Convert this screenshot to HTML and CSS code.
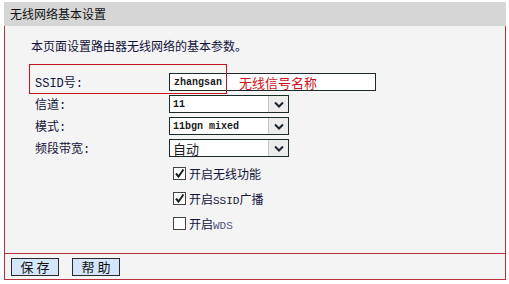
FILE: index.html
```html
<!doctype html>
<html lang="zh-CN">
  <head>
    <meta charset="UTF-8" />
    <title>无线网络基本设置</title>
    <link rel="stylesheet" href="styles.css">
  </head>
  <body>
    <div class="page">
      <div class="title">无线网络基本设置</div>
      <div class="panel">
        <div class="content">
          <p class="intro">本页面设置路由器无线网络的基本参数。</p>

          <div class="form">
            <div class="row">
              <label class="label">SSID号:</label>
              <div class="field text-field">
                <span class="value">zhangsan</span>
                <span class="note">无线信号名称</span>
              </div>
            </div>
            <div class="row">
              <label class="label">信道:</label>
              <div class="field select">
                <span class="value">11</span>
                <span class="arrow"><svg width="10" height="7" viewBox="0 0 10 7"><path d="M1 1.5 L5 5.5 L9 1.5" fill="none" stroke="#1c2430" stroke-width="2"/></svg></span>
              </div>
            </div>
            <div class="row">
              <label class="label">模式:</label>
              <div class="field select">
                <span class="value">11bgn mixed</span>
                <span class="arrow"><svg width="10" height="7" viewBox="0 0 10 7"><path d="M1 1.5 L5 5.5 L9 1.5" fill="none" stroke="#1c2430" stroke-width="2"/></svg></span>
              </div>
            </div>
            <div class="row">
              <label class="label">频段带宽:</label>
              <div class="field select">
                <span class="value cjk">自动</span>
                <span class="arrow"><svg width="10" height="7" viewBox="0 0 10 7"><path d="M1 1.5 L5 5.5 L9 1.5" fill="none" stroke="#1c2430" stroke-width="2"/></svg></span>
              </div>
            </div>

            <div class="checks">
              <div class="check">
                <span class="box"><svg width="11" height="11" viewBox="0 0 11 11"><path d="M2 5.5 L4.5 8.5 L9.5 1.5" fill="none" stroke="#222" stroke-width="2"/></svg></span>
                <span>开启无线功能</span>
              </div>
              <div class="check">
                <span class="box"><svg width="11" height="11" viewBox="0 0 11 11"><path d="M2 5.5 L4.5 8.5 L9.5 1.5" fill="none" stroke="#222" stroke-width="2"/></svg></span>
                <span>开启<span class="mono">SSID</span>广播</span>
              </div>
              <div class="check">
                <span class="box"></span>
                <span>开启<span class="mono dim">WDS</span></span>
              </div>
            </div>
          </div>

          <!-- annotation box round the SSID row -->
          <div class="mark"></div>
        </div>
        <div class="footer">
          <button type="button" class="btn">保 存</button>
          <button type="button" class="btn">帮 助</button>
        </div>
      </div>
    </div>
  </body>
</html>
```

FILE: styles.css
```css
body {
  margin: 0;
  background: #fff;
  font-family: "Noto Sans CJK SC", sans-serif;
  font-size: 12px;
  color: #12123a;
}

.page {
  width: 502px;
  margin: 2px 0 0 4px;
}

.title {
  height: 24px;
  line-height: 24px;
  padding-left: 6px;
  background: #d6d6d6;
  color: #111;
  font-size: 12px;
}

.panel {
  border: 1px solid #b8303c;
  border-top: none;
  background: #f4f4f4;
}

.content {
  position: relative;
  height: 227px;
  padding: 12px 0 0 26px;
  box-sizing: border-box;
}

.intro {
  margin: 0;
  height: 16px;
  line-height: 16px;
}

.form {
  margin-top: 19px;
  padding-left: 4px;
}

.row {
  display: flex;
  align-items: center;
  height: 18px;
  margin-bottom: 4px;
}

.label {
  width: 134px;
  font-family: "Liberation Mono", "Noto Sans CJK SC", monospace;
}

.mono {
  font-family: "Liberation Mono", monospace;
  font-size: 11px;
}

.mono.dim {
  color: #55557a;
}

.field {
  display: flex;
  align-items: center;
  height: 18px;
  box-sizing: border-box;
  border: 1px solid #1c2a2a;
  background: #fff;
}

.text-field {
  width: 207px;
  padding-left: 4px;
}

.select {
  width: 120px;
  padding-left: 3px;
}

.value {
  flex: 1;
  font-family: "Liberation Mono", monospace;
  font-size: 10px;
  font-weight: bold;
  color: #1a1a1a;
}

.text-field .value {
  flex: none;
}

.value.cjk {
  font-family: "Noto Sans CJK SC", sans-serif;
  font-size: 13px;
  font-weight: normal;
}

.note {
  margin-left: 17px;
  color: #d0101a;
  font-size: 13px;
}

.arrow {
  display: flex;
  align-items: center;
  justify-content: center;
  width: 19px;
  height: 16px;
  background: #ececec;
  border-left: 1px solid #c8c8c8;
}

.checks {
  margin-left: 138px;
}

.check {
  display: flex;
  align-items: center;
  gap: 3px;
  height: 25px;
}

.box {
  display: flex;
  align-items: center;
  justify-content: center;
  width: 13px;
  height: 13px;
  box-sizing: border-box;
  border: 1px solid #444;
  background: #fff;
}

.mark {
  position: absolute;
  left: 24px;
  top: 38px;
  width: 198px;
  height: 30px;
  box-sizing: border-box;
  border: 1px solid #c4141e;
}

.footer {
  display: flex;
  align-items: center;
  gap: 13px;
  height: 25px;
  padding-left: 6px;
  border-top: 1px solid #b8303c;
}

.btn {
  width: 48px;
  height: 18px;
  padding: 0;
  border: 1px solid #2a2a2a;
  background: #d4e6fa;
  font-family: "Noto Sans CJK SC", sans-serif;
  font-size: 13px;
  line-height: 16px;
  color: #111;
}
```
